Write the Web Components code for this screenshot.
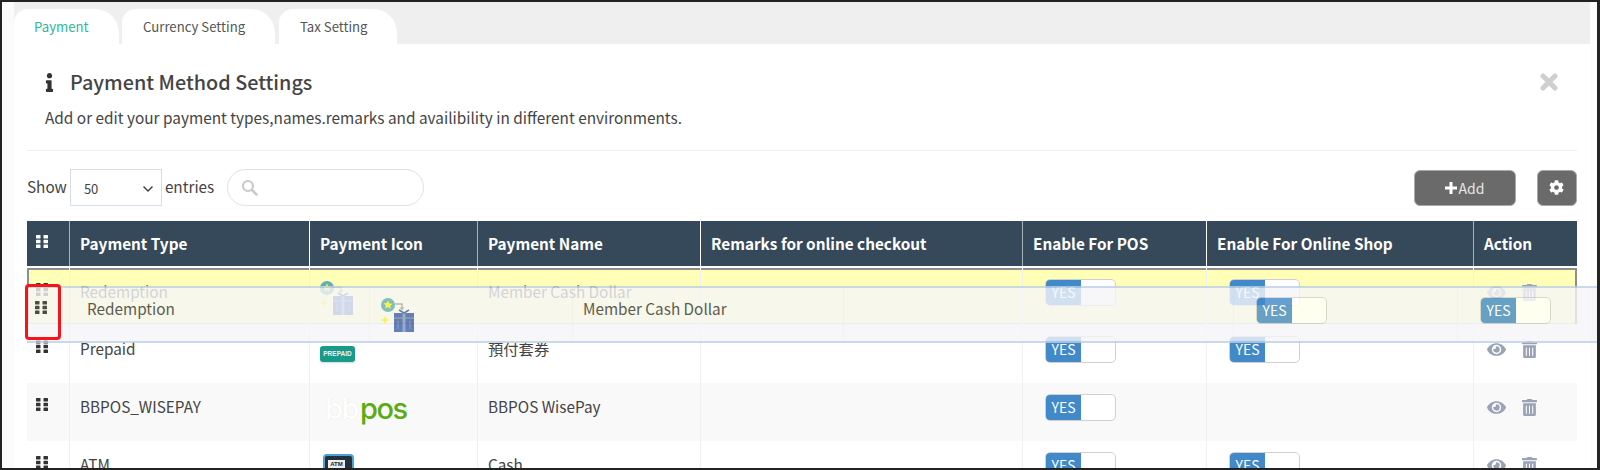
<!DOCTYPE html>
<html>
<head>
<meta charset="utf-8">
<title>Payment Method Settings</title>
<style>
html,body{margin:0;padding:0;background:#fff;}
body{font-family:"Noto Sans CJK TC","Noto Sans",sans-serif;color:#444;}
</style>
</head>
<body>
<pay-frame>
  <pay-tabs></pay-tabs>
  <pay-card>
    <settings-head></settings-head>
    <table-toolbar></table-toolbar>
    <pay-table>
      <pay-row slot="rows" ghost type="Redemption" name="Member Cash Dollar" pos online height="56" gap="1">
        <gift-icon slot="icon"></gift-icon>
      </pay-row>
      <pay-row slot="rows" type="Prepaid" name="預付套券" pos online height="58">
        <prepaid-icon slot="icon"></prepaid-icon>
      </pay-row>
      <pay-row slot="rows" striped type="BBPOS_WISEPAY" name="BBPOS WisePay" pos height="57.5">
        <bbpos-icon slot="icon"></bbpos-icon>
      </pay-row>
      <pay-row slot="rows" type="ATM" name="Cash" pos online height="57.5">
        <atm-icon slot="icon"></atm-icon>
      </pay-row>
    </pay-table>
  </pay-card>
  <drag-clone slot="over"></drag-clone>
  <red-mark slot="over"></red-mark>
</pay-frame>

<script>
const FONT='"Noto Sans CJK TC","Noto Sans",sans-serif';

class PayFrame extends HTMLElement{
    constructor(){
        super();
        this.attachShadow({mode:"open"}).innerHTML=`
        <style>
        :host{
            display:block;
            position:relative;
            box-sizing:border-box;
            width:1600px;
            height:470px;
            overflow:hidden;
            border:solid #222;
            border-width:2px 3px 2px 2px;
            background:#fbfbfb;
            font-family:${FONT};
        }
        .page{
            width:1576px;
            height:100%;
            margin-left:12px;
            background:#efefef;
            padding-top:7px;
            box-sizing:border-box;
        }
        </style>
        <div class="page"><slot></slot></div>
        <slot name="over"></slot>`;
    }
}

class PayTabs extends HTMLElement{
    constructor(){
        super();
        this.attachShadow({mode:"open"}).innerHTML=`
        <style>
        :host{display:flex;height:35px;align-items:flex-end;}
        .tab{
            box-sizing:border-box;
            height:35px;
            background:#fff;
            border-radius:14px 24px 0 0;
            font-size:13.2px;
            line-height:35px;
            color:#555;
            padding-left:20px;
        }
        .on{color:#2fb5a0;}
        .tab+.tab{padding-left:21px;}
        </style>
        <div class="tab on" style="width:105px;margin-right:3px">Payment</div>
        <div class="tab" style="width:153px;margin-right:4px">Currency Setting</div>
        <div class="tab" style="width:118px">Tax Setting</div>`;
    }
}

class PayCard extends HTMLElement{
    constructor(){
        super();
        this.attachShadow({mode:"open"}).innerHTML=`
        <style>
        :host{display:block;background:#fff;padding:0 13px;height:440px;box-sizing:border-box;}
        </style>
        <slot></slot>`;
    }
}

class SettingsHead extends HTMLElement{
    constructor(){
        super();
        this.attachShadow({mode:"open"}).innerHTML=`
        <style>
        :host{display:block;padding:0 18px;height:107px;border-bottom:1px solid #efefef;box-sizing:border-box;}
        .title{display:flex;align-items:center;height:30px;padding-top:23px;}
        .i{width:9px;height:19px;fill:#333;flex:none;}
        h2{margin:0 0 0 16px;font-size:19.8px;font-weight:500;color:#444;line-height:30px;flex:1;}
        .x{width:18px;height:18px;margin-right:1px;flex:none;}
        p{margin:9px 0 0;font-size:15.37px;line-height:22px;color:#444;}
        </style>
        <div class="title">
            <svg class="i" viewBox="0 0 192 512"><path d="M20 424.229h20V279.771H20c-11.046 0-20-8.954-20-20V212c0-11.046 8.954-20 20-20h112c11.046 0 20 8.954 20 20v212.229h20c11.046 0 20 8.954 20 20V492c0 11.046-8.954 20-20 20H20c-11.046 0-20-8.954-20-20v-47.771c0-11.046 8.954-20 20-20zM96 0C56.235 0 24 32.235 24 72s32.235 72 72 72 72-32.235 72-72S135.764 0 96 0z"/></svg>
            <h2>Payment Method Settings</h2>
            <svg class="x" viewBox="0 0 18 18"><path d="M3 3l12 12M15 3L3 15" stroke="#cfcfcf" stroke-width="5" stroke-linecap="round"/></svg>
        </div>
        <p>Add or edit your payment types,names.remarks and availibility in different environments.</p>`;
    }
}

class TableToolbar extends HTMLElement{
    constructor(){
        super();
        this.attachShadow({mode:"open"}).innerHTML=`
        <style>
        :host{display:flex;align-items:center;height:37px;margin-top:18px;font-size:15.3px;color:#444;}
        .lbl{margin-top:-3px;}
        .sel{
            box-sizing:border-box;width:92px;height:37px;margin:0 3px 0 3px;
            border:1px solid #d8dce8;display:flex;align-items:center;justify-content:space-between;
            padding:2px 7px 0 13px;font-size:13px;color:#444;
        }
        .search{
            box-sizing:border-box;width:197px;height:37px;margin-left:13px;
            border:1px solid #dfdfe6;border-radius:19px;display:flex;align-items:center;padding-left:13px;
        }
        .sp{flex:1;}
        .add,.cog{
            box-sizing:border-box;height:36px;background:#6a6a6a;border:1px solid #a9a9a9;border-radius:6px;
            display:flex;align-items:center;justify-content:center;color:#e6e6e6;font-size:14px;
        }
        .add{width:102px;margin-right:21px;}
        .cog{width:40.5px;}
        </style>
        <span class="lbl">Show</span>
        <div class="sel">50<svg width="12" height="8" viewBox="0 0 12 8"><path d="M1.5 1.5L6 6l4.5-4.5" fill="none" stroke="#444" stroke-width="1.5"/></svg></div>
        <span class="lbl">entries</span>
        <div class="search"><svg width="17" height="17" viewBox="0 0 17 17"><circle cx="7" cy="7" r="5" fill="none" stroke="#c9c9c9" stroke-width="2.2"/><path d="M11 11l4.5 4.5" stroke="#c9c9c9" stroke-width="2.6" stroke-linecap="round"/></svg></div>
        <div class="sp"></div>
        <div class="add"><svg width="12" height="12" viewBox="0 0 12 12" style="margin-right:2px"><path d="M4.5 0h3v4.500h4.500v3h-4.500v4.500h-3v-4.500h-4.500v-3h4.500z" fill="#fff"/></svg>Add</div>
        <div class="cog"><svg width="15" height="15" viewBox="0 0 512 512"><path fill="#fff" d="M487.4 315.7l-42.6-24.6c4.3-23.2 4.3-47 0-70.2l42.6-24.6c4.9-2.8 7.1-8.6 5.5-14-11.1-35.6-30-67.8-54.7-94.6-3.8-4.1-10-5.1-14.8-2.3L380.8 110c-17.9-15.4-38.5-27.3-60.8-35.1V25.8c0-5.6-3.9-10.5-9.4-11.7-36.7-8.2-74.3-7.8-109.2 0-5.5 1.2-9.4 6.1-9.4 11.7V75c-22.2 7.9-42.8 19.8-60.8 35.1L88.7 85.5c-4.9-2.8-11-1.9-14.8 2.3-24.7 26.7-43.6 58.9-54.7 94.6-1.7 5.4.6 11.2 5.5 14L67.3 221c-4.3 23.2-4.3 47 0 70.2l-42.6 24.6c-4.9 2.8-7.1 8.6-5.5 14 11.1 35.6 30 67.8 54.7 94.6 3.8 4.1 10 5.1 14.8 2.3l42.6-24.6c17.9 15.4 38.5 27.3 60.8 35.1v49.2c0 5.6 3.9 10.5 9.4 11.7 36.7 8.2 74.3 7.8 109.2 0 5.5-1.2 9.4-6.1 9.4-11.7v-49.2c22.2-7.9 42.8-19.8 60.8-35.1l42.6 24.6c4.9 2.8 11 1.9 14.8-2.3 24.7-26.7 43.6-58.9 54.7-94.6 1.5-5.500-.7-11.300-5.600-14.100zM256 336c-44.100 0-80-35.900-80-80s35.900-80 80-80 80 35.900 80 80-35.900 80-80 80z"/></svg></div>`;
    }
}

class GripIcon extends HTMLElement{
    constructor(){
        super();
        const c=this.getAttribute("color")||"#333";
        this.attachShadow({mode:"open"}).innerHTML=`
        <style>:host{display:block;width:12px;height:13px;}svg{display:block;}</style>
        <svg width="12" height="13" viewBox="0 0 12 13" fill="${c}">
            <rect x="0" y="0" width="4.500" height="3.500" rx=".6"/><rect x="7.500" y="0" width="4.500" height="3.500" rx=".6"/>
            <rect x="0" y="4.800" width="4.500" height="3.500" rx=".6"/><rect x="7.500" y="4.800" width="4.500" height="3.500" rx=".6"/>
            <rect x="0" y="9.500" width="4.500" height="3.500" rx=".6"/><rect x="7.500" y="9.500" width="4.500" height="3.500" rx=".6"/>
        </svg>`;
    }
}

class YesToggle extends HTMLElement{
    constructor(){
        super();
        this.attachShadow({mode:"open"}).innerHTML=`
        <style>
        :host{display:flex;box-sizing:border-box;width:71px;height:27px;border:1px solid #d0d0d0;border-radius:5px;overflow:hidden;background:#fff;}
        .yes{width:35px;background:#4189c9;color:#fff;font-size:14px;line-height:25px;text-align:center;}
        </style>
        <div class="yes">YES</div>`;
    }
}

class GiftIcon extends HTMLElement{
    constructor(){
        super();
        this.attachShadow({mode:"open"}).innerHTML=`
        <style>:host{display:block;width:34px;height:34px;}svg{display:block;}</style>
        <svg width="34" height="34" viewBox="0 0 34 34">
            <circle cx="7" cy="7" r="7" fill="#63aebd"/>
            <path d="M7 2.500l1.400 2.900 3.100.4-2.300 2.100.6 3.100L7 9l-2.800 1.500.6-3.100-2.300-2.100 3.100-.4z" fill="#f7f233"/>
            <path d="M4 18l1.300 2.700L8 22l-2.700 1.300L4 26l-1.300-2.700L0 22l2.700-1.300z" fill="#f7f233"/>
            <path d="M14 6h7v4" fill="none" stroke="#aaa" stroke-width="1.500"/>
            <path d="M18.500 9.500h5l-2.500 3z" fill="#aaa"/>
            <rect x="13" y="15" width="20" height="19" fill="#4160a8"/>
            <path d="M13 20h20" stroke="#7f97cc" stroke-width="1"/>
            <path d="M21.500 15h3v19h-3z" fill="#7f97cc"/>
            <path d="M23 15l-5-3M23 15l5-3" fill="none" stroke="#4160a8" stroke-width="1.500"/>
            <path d="M29 23v8M17 23v8" stroke="#6f88c0" stroke-width="1"/>
        </svg>`;
    }
}

class PrepaidIcon extends HTMLElement{
    constructor(){
        super();
        this.attachShadow({mode:"open"}).innerHTML=`
        <style>
        :host{display:block;box-sizing:border-box;width:35px;height:16px;margin-top:11px;background:#1a9a8a;border-radius:3px;
            color:#e9f6f4;font:700 6.500px/16px "Liberation Sans",sans-serif;text-align:center;white-space:nowrap;box-shadow:0 1px 2px #cfd8dc;}
        </style>
        PREPAID`;
    }
}

class BbposIcon extends HTMLElement{
    constructor(){
        super();
        this.attachShadow({mode:"open"}).innerHTML=`
        <style>
        :host{display:flex;font:500 29px/28px Inter,sans-serif;letter-spacing:-1.5px;margin:2px 0 0 5px;height:30px;white-space:nowrap;}
        .bb{color:#fff;text-shadow:0 0 1px #dcdcdc;width:35px;}
        .pos{color:#5cab12;}
        </style>
        <span class="bb">bb</span><span class="pos">pos</span>`;
    }
}

class AtmIcon extends HTMLElement{
    constructor(){
        super();
        this.attachShadow({mode:"open"}).innerHTML=`
        <style>
        :host{display:block;box-sizing:border-box;width:31px;height:31px;margin:3px 0 0 3px;background:#25303c;border:2px solid #4aa3d6;border-radius:4px;padding:4px 3px;}
        div{background:#eee;color:#222;font:700 6px/9px "Liberation Sans",sans-serif;width:17px;text-align:center;}
        </style>
        <div>ATM</div>`;
    }
}

class ActionIcons extends HTMLElement{
    constructor(){
        super();
        this.attachShadow({mode:"open"}).innerHTML=`
        <style>
        :host{display:flex;align-items:center;gap:16px;margin:2px 0 0 3px;}
        svg{display:block;fill:#9aa3b5;}
        </style>
        <svg width="19" height="17" viewBox="0 0 576 512"><path d="M572.52 241.4C518.29 135.59 410.93 64 288 64S57.68 135.64 3.48 241.41a32.35 32.35 0 0 0 0 29.19C57.71 376.41 165.07 448 288 448s230.32-71.64 284.52-177.41a32.35 32.35 0 0 0 0-29.19zM288 400a144 144 0 1 1 144-144 143.93 143.93 0 0 1-144 144zm0-240a95.31 95.31 0 0 0-25.31 3.79 47.85 47.85 0 0 1-66.9 66.9A95.78 95.78 0 1 0 288 160z"/></svg>
        <svg width="15" height="17" viewBox="0 0 448 512"><path d="M32 464a48 48 0 0 0 48 48h288a48 48 0 0 0 48-48V128H32zm272-256a16 16 0 0 1 32 0v224a16 16 0 0 1-32 0zm-96 0a16 16 0 0 1 32 0v224a16 16 0 0 1-32 0zm-96 0a16 16 0 0 1 32 0v224a16 16 0 0 1-32 0zM432 32H312l-9.4-18.700A24 24 0 0 0 281.100 0H166.800a23.720 23.720 0 0 0-21.400 13.300L136 32H16A16 16 0 0 0 0 48v32a16 16 0 0 0 16 16h416a16 16 0 0 0 16-16V48a16 16 0 0 0-16-16z"/></svg>`;
    }
}

const COLS="42px 240px 168px 223px 322px 184px 267px 104px";

class PayTable extends HTMLElement{
    constructor(){
        super();
        this.attachShadow({mode:"open"}).innerHTML=`
        <style>
        :host{display:block;margin-top:15px;width:1550px;}
        .head{display:grid;grid-template-columns:${COLS};height:45px;background:#36495a;margin-bottom:2px;}
        .head div{box-sizing:border-box;border-left:1px solid #a8b2bb;padding:11px 0 0 10px;color:#fff;font-size:15.3px;font-weight:700;line-height:22px;white-space:nowrap;}
        .head div:first-child{border-left:0;padding:14px 0 0 9px;}
        .head .w{border-left-color:#fff;}
        </style>
        <div class="head">
            <div><grip-icon color="#fff"></grip-icon></div>
            <div>Payment Type</div>
            <div class="w">Payment Icon</div>
            <div>Payment Name</div>
            <div class="w">Remarks for online checkout</div>
            <div>Enable For POS</div>
            <div class="w">Enable For Online Shop</div>
            <div>Action</div>
        </div>
        <slot name="rows"></slot>`;
    }
}

class PayRow extends HTMLElement{
    constructor(){
        super();
        const type=this.getAttribute("type"), name=this.getAttribute("name");
        const pos=this.hasAttribute("pos"), online=this.hasAttribute("online");
        const ghost=this.hasAttribute("ghost"), striped=this.hasAttribute("striped");
        const h=this.getAttribute("height"), gap=this.getAttribute("gap")||0;
        this.attachShadow({mode:"open"}).innerHTML=`
        <style>
        :host{
            display:grid;grid-template-columns:${COLS};box-sizing:border-box;
            height:${h}px;margin-bottom:${gap}px;overflow:hidden;
            background:${ghost?"#ffffb8":striped?"#f9f9f9":"#fff"};
            ${ghost?"box-shadow:inset 2px 0 #8e8e8e,inset -2px 0 #8e8e8e,inset 0 2px #8e8e8e,inset 0 -1px #c8c8c8;":""}
            font-size:15.3px;color:#444;
        }
        .c{box-sizing:border-box;border-left:1px solid #f0f0f0;padding:12px 0 0 10px;line-height:22px;white-space:nowrap;}
        .g{border-left:0;padding:15px 0 0 9px;}
        .t{padding-top:11px;padding-left:22px;}
        .ic{padding-top:${ghost?13:10}px;}
        .a{padding-top:14px;}
        </style>
        <div class="c g"><grip-icon></grip-icon></div>
        <div class="c">${type}</div>
        <div class="c ic"><slot name="icon"></slot></div>
        <div class="c">${name}</div>
        <div class="c"></div>
        <div class="c t">${pos?"<yes-toggle></yes-toggle>":""}</div>
        <div class="c t">${online?"<yes-toggle></yes-toggle>":""}</div>
        <div class="c a"><action-icons></action-icons></div>`;
    }
}

/* the row being dragged: its own column widths, laid over the table */
class DragClone extends HTMLElement{
    constructor(){
        super();
        this.attachShadow({mode:"open"}).innerHTML=`
        <style>
        :host{
            position:absolute;left:25px;top:284px;width:1575px;height:57px;box-sizing:border-box;
            border:solid #bdd0e6;border-width:2px 0;
            background:#f6f6fa;opacity:.8;
            display:grid;grid-template-columns:42px 300px 203px 271px 390px 224px 145px;
            font-size:15.3px;color:#333;
        }
        .c{box-sizing:border-box;border-left:1px solid #f0f0f0;padding-top:9px;line-height:22px;white-space:nowrap;}
        .g{border-left:0;padding:13px 0 0 8px;}
        </style>
        <div class="c g"><grip-icon color="#222"></grip-icon></div>
        <div class="c" style="padding-left:17px">Redemption</div>
        <div class="c" style="padding:10px 0 0 11px"><gift-icon></gift-icon></div>
        <div class="c" style="padding-left:10px">Member Cash Dollar</div>
        <div class="c"></div>
        <div class="c" style="padding:9px 0 0 22px"><yes-toggle></yes-toggle></div>
        <div class="c" style="padding:9px 0 0 22px"><yes-toggle></yes-toggle></div>`;
    }
}

class RedMark extends HTMLElement{
    constructor(){
        super();
        this.attachShadow({mode:"open"}).innerHTML=`
        <style>
        :host{position:absolute;left:23px;top:282px;width:36px;height:56px;box-sizing:border-box;border:3px solid #f5141a;border-radius:4px;}
        </style>`;
    }
}

customElements.define("grip-icon",GripIcon);
customElements.define("yes-toggle",YesToggle);
customElements.define("gift-icon",GiftIcon);
customElements.define("prepaid-icon",PrepaidIcon);
customElements.define("bbpos-icon",BbposIcon);
customElements.define("atm-icon",AtmIcon);
customElements.define("action-icons",ActionIcons);
customElements.define("pay-tabs",PayTabs);
customElements.define("pay-card",PayCard);
customElements.define("settings-head",SettingsHead);
customElements.define("table-toolbar",TableToolbar);
customElements.define("pay-table",PayTable);
customElements.define("pay-row",PayRow);
customElements.define("drag-clone",DragClone);
customElements.define("red-mark",RedMark);
customElements.define("pay-frame",PayFrame);
</script>
</body>
</html>
